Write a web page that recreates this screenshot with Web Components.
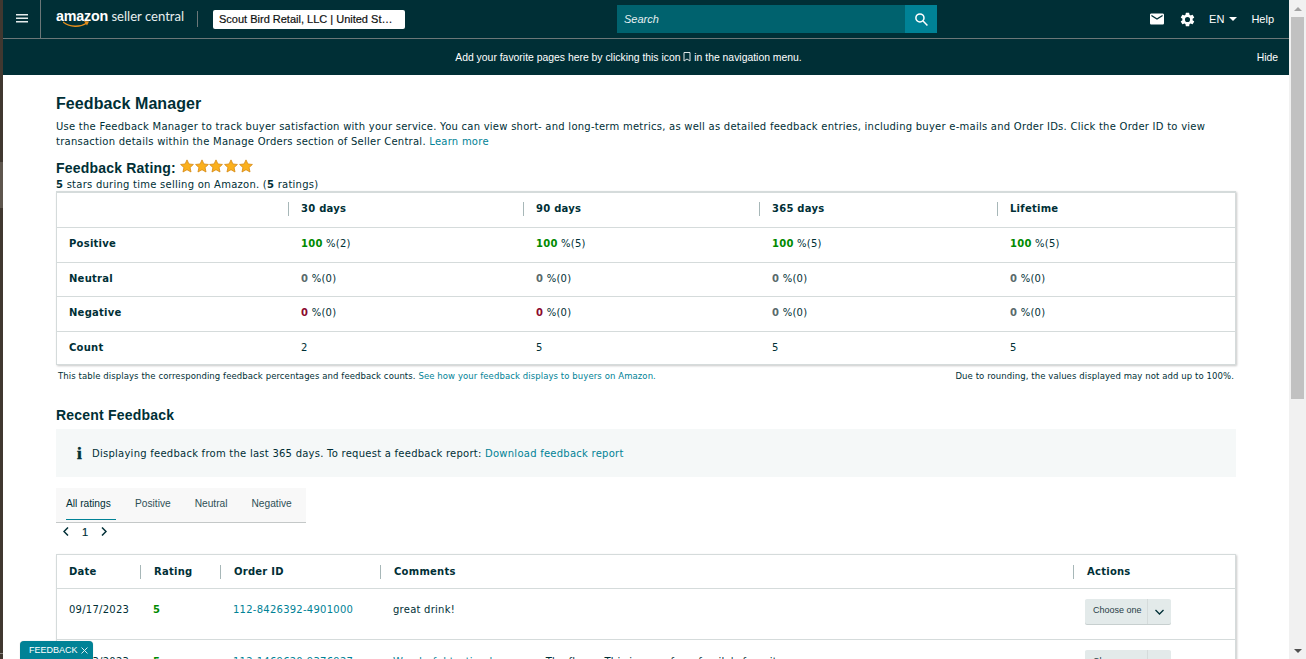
<!DOCTYPE html>
<html lang="en"><head><meta charset="utf-8"><title>Feedback Manager</title>
<style>
html,body{margin:0;height:659px;overflow:hidden;background:#fff}
body{display:flex;font-family:"DejaVu Sans",sans-serif;color:#002f36;position:relative}
</style></head><body>
<edge-strip></edge-strip>
<main-view>
  <top-nav></top-nav>
  <favorites-banner></favorites-banner>
  <page-content>
    <h-title size="16" style="margin-top:19px;letter-spacing:.08px">Feedback Manager</h-title>
    <intro-text>Use the Feedback Manager to track buyer satisfaction with your service. You can view short- and long-term metrics, as well as detailed feedback entries, including buyer e-mails and Order IDs. Click the Order ID to view transaction details within the Manage Orders section of Seller Central. <a>Learn more</a></intro-text>
    <rating-summary></rating-summary>
    <metrics-table></metrics-table>
    <table-notes></table-notes>
    <h-title size="14" style="margin-top:23px;letter-spacing:.2px">Recent Feedback</h-title>
    <info-alert></info-alert>
    <rating-tabs></rating-tabs>
    <page-nav></page-nav>
    <feedback-table></feedback-table>
  </page-content>
</main-view>
<fake-scrollbar></fake-scrollbar>
<feedback-tab></feedback-tab>
<script>
const def=(n,html,extra)=>customElements.define(n,class extends HTMLElement{
  constructor(){super();this.attachShadow({mode:'open'}).innerHTML=html;}
  connectedCallback(){extra&&extra.call(this)}
});
const mail='<svg width="14" height="14" viewBox="2 2 20 20" fill="#fff"><path d="M20 4H4c-1.1 0-2 .9-2 2v12c0 1.1.9 2 2 2h16c1.1 0 2-.9 2-2V6c0-1.1-.9-2-2-2zm0 4l-8 5-8-5V6l8 5 8-5v2z"/></svg>';
const gear='<svg width="15" height="15" viewBox="1.500 1.500 21 21" fill="#fff"><path d="M19.140 12.940c.04-.3.06-.61.06-.94s-.02-.64-.07-.94l2.030-1.580a.49.49 0 0 0 .12-.61l-1.920-3.320a.49.49 0 0 0-.59-.22l-2.390.96c-.5-.38-1.030-.7-1.620-.94l-.36-2.540a.48.48 0 0 0-.48-.41h-3.840a.48.48 0 0 0-.47.41l-.36 2.540c-.59.24-1.130.57-1.620.94l-2.390-.96a.48.48 0 0 0-.59.22L2.740 8.870a.47.47 0 0 0 .12.61l2.030 1.580c-.05.3-.09.63-.09.94s.02.64.07.94l-2.030 1.580a.49.49 0 0 0-.12.61l1.920 3.320c.12.22.37.29.59.22l2.390-.96c.5.38 1.030.7 1.620.94l.36 2.540c.05.24.24.41.48.41h3.840c.24 0 .44-.17.47-.41l.36-2.540c.59-.24 1.130-.56 1.620-.94l2.390.96c.22.08.47 0 .59-.22l1.920-3.320a.47.47 0 0 0-.12-.61l-2.010-1.580zM12 15.600A3.600 3.600 0 1 1 12 8.400a3.600 3.600 0 0 1 0 7.200z"/></svg>';
def('edge-strip',`<style>:host{display:block;width:3px;flex:none;background:#403830;position:relative}i{position:absolute;left:0;top:162px;width:3px;height:46px;background:#5e564e}u{position:absolute;left:0;top:653px;width:3px;height:1px;background:#8a8580}</style><i></i><u></u>`);
def('main-view',`<style>:host{display:flex;flex-direction:column;flex:1;min-width:0;height:659px;overflow:hidden}</style><slot></slot>`);
def('top-nav',`<style>
:host{display:flex;align-items:center;height:38px;background:#002f36;border-bottom:1px solid #6c7778;color:#fff;font-family:"Liberation Sans",sans-serif;flex:none}
.menu{width:37px;height:38px;border-right:1px solid #6c7778;display:flex;align-items:center;justify-content:center;flex:none}
.menu svg{margin-left:1px}
.logo{margin-left:15px;width:129px;position:relative;font-family:"Lato",sans-serif;font-size:13.100px;line-height:16px;white-space:nowrap;height:22px;color:#e8eeee}
.logo b{font-family:"Liberation Sans",sans-serif;font-weight:700;font-size:14.300px;letter-spacing:-.2px;color:#fff}
.logo svg{position:absolute;left:7px;top:13px}
.sep{width:1px;height:16px;background:#6c7778;margin:0 15px 0 12px}
.acct{width:192px;height:19px;box-sizing:border-box;background:#fff;color:#0f1111;border-radius:2px;font-size:11px;font-weight:400;display:flex;align-items:center;padding:0 6px;white-space:nowrap;-webkit-text-stroke:.2px #0f1111;flex:none}
.search{margin-left:212px;width:320px;height:28px;display:flex;flex:none}
.search span{flex:1;background:#00626e;font:italic 11px "Liberation Sans",sans-serif;line-height:28px;padding-left:7px;color:#e6f0f2}
.search button{all:unset;width:32px;background:#008296;display:flex;align-items:center;justify-content:center}
.right{margin-left:auto;display:flex;align-items:center;font-size:11px}
.right>*{flex:none}
.car{display:inline-block;width:0;height:0;border:4px solid transparent;border-top:4px solid #fff;border-bottom:0;margin-left:5px;vertical-align:2px}
</style>
<div class="menu"><svg width="12" height="10" viewBox="0 0 12 10" fill="#e6ecec"><path d="M0 0h12v1.600H0zM0 3.500h12v1.600H0zM0 7h12v1.600H0z"/></svg></div>
<div class="logo"><b>amazon</b> seller central<svg width="28" height="8" viewBox="0 0 28 8"><path d="M0 1c7 5.500 17 5.500 24 1" fill="none" stroke="#e88f1c" stroke-width="1.300"/><path d="M21 0l5 .5-2 4z" fill="#e88f1c"/></svg></div>
<div class="sep"></div>
<div class="acct">Scout Bird Retail, LLC | United St…</div>
<div class="search"><span>Search</span><button><svg width="15" height="15" viewBox="0 0 24 24" fill="none" stroke="#fff" stroke-width="2.400"><circle cx="9.500" cy="9.500" r="6.500"/><path d="M14.500 14.500l7 7"/></svg></button></div>
<div class="right"><span style="margin-right:16px;display:flex">${mail}</span><span style="margin-right:14px;display:flex">${gear}</span><span>EN<i class="car"></i></span><span style="margin:0 15px 0 14px">Help</span></div>`);
def('favorites-banner',`<style>:host{display:flex;height:36px;align-items:center;background:#002f36;color:#fff;font:10.400px "Liberation Sans",sans-serif;position:relative;justify-content:center;flex:none;padding-right:35px}
svg{vertical-align:-1px}em{font-style:normal;position:absolute;right:11px}</style>
<span>Add your favorite pages here by clicking this icon <svg width="8" height="10" viewBox="0 0 8 10" fill="none" stroke="#dfe6e7"><path d="M1 .5h6v8.500L4 7 1 9z"/></svg> in the navigation menu.</span><em>Hide</em>`);
def('page-content',`<style>:host{display:flex;flex-direction:column;padding:0 53px 0 53px;flex:none}</style><slot></slot>`);
def('h-title',`<style>:host{display:block;font:700 16px/20px "Liberation Sans",sans-serif;color:#002f36}</style><slot></slot>`,function(){this.style.fontSize=this.getAttribute('size')+'px'});
def('intro-text',`<style>:host{display:block;font:10px/15px "DejaVu Sans",sans-serif;letter-spacing:.25px;color:#002f36;margin-top:5px}::slotted(a){color:#008296}</style><slot></slot>`);
const star='<svg width="14" height="14" viewBox="0 0 24 24" style="flex:none"><path d="M12 1.500l3.300 7 7.700.9-5.700 5.200 1.600 7.700L12 18.400 5.100 22.300l1.600-7.700L1 9.400l7.700-.9z" fill="#fbb01c" stroke="#d3860e" stroke-width="1.300"/></svg>';
def('rating-summary',`<style>:host{display:block;margin-top:9px;height:33px}
.t{display:flex;align-items:center;height:20px;font:700 14px/20px "Liberation Sans",sans-serif;letter-spacing:.2px;gap:4px}
.s{display:flex;gap:.8px;margin-top:-4px}.d{font:10px/12px "DejaVu Sans",sans-serif;letter-spacing:.25px;margin-top:1px}b{font-weight:700}</style>
<div class="t">Feedback Rating:<span class="s">${star.repeat(5)}</span></div><div class="d"><b>5</b> stars during time selling on Amazon. (<b>5</b> ratings)</div>`);
const cols5='231px 235px 236px 238px 238px';
def('metrics-table',`<style>:host{display:block;border:1px solid #d5dbdb;box-shadow:1px 1px 2px rgba(0,0,0,.22);height:174px;box-sizing:border-box;font:10px/14px "DejaVu Sans",sans-serif;letter-spacing:.25px;color:#002f36;background:#fff}
.r{display:grid;grid-template-columns:${cols5};align-items:center;border-top:1px solid #d5dbdb;height:35px;box-sizing:border-box;padding-bottom:2px}
.r:first-child{border-top:0;height:33px}
.r>*{padding-left:13px}.r>*:first-child{padding-left:12px}
.r.h>*{font-weight:700;padding-left:12px;border-left:1px solid #a7b7b8;line-height:14px}.r.h>*:first-child{border:0}
.r span b{font-weight:700}.g{color:#008a00}.z{color:#5a6b6c}.m{color:#8c0a2e}
.r>b{font-weight:700}</style>
<div class="r h"><span></span><span>30 days</span><span>90 days</span><span>365 days</span><span>Lifetime</span></div>
<div class="r"><b>Positive</b><span><b class="g">100</b> %(2)</span><span><b class="g">100</b> %(5)</span><span><b class="g">100</b> %(5)</span><span><b class="g">100</b> %(5)</span></div>
<div class="r" style="height:34px"><b>Neutral</b><span><b class="z">0</b> %(0)</span><span><b class="z">0</b> %(0)</span><span><b class="z">0</b> %(0)</span><span><b class="z">0</b> %(0)</span></div>
<div class="r"><b>Negative</b><span><b class="m">0</b> %(0)</span><span><b class="m">0</b> %(0)</span><span><b class="z">0</b> %(0)</span><span><b class="z">0</b> %(0)</span></div>
<div class="r"><b>Count</b><span>2</span><span>5</span><span>5</span><span>5</span></div>`);
def('table-notes',`<style>:host{display:flex;justify-content:space-between;font:8.500px/12px "DejaVu Sans",sans-serif;letter-spacing:.09px;margin-top:5px;padding:0 2px;color:#002f36}a{color:#008296}</style>
<span>This table displays the corresponding feedback percentages and feedback counts. <a>See how your feedback displays to buyers on Amazon.</a></span><span>Due to rounding, the values displayed may not add up to 100%.</span>`);
def('info-alert',`<style>:host{display:flex;align-items:center;height:48px;box-sizing:border-box;padding-top:1px;background:#f5f8f8;margin-top:4px;padding-left:21px;font:10px/14px "DejaVu Sans",sans-serif;letter-spacing:.25px;color:#002f36}
b{font:700 17px "Liberation Serif",serif;width:15px;-webkit-text-stroke:.6px #002f36}a{color:#008296}</style><b>i</b><span>Displaying feedback from the last 365 days. To request a feedback report: <a>Download feedback report</a></span>`);
def('rating-tabs',`<style>:host{display:flex;width:250px;height:35px;box-sizing:border-box;background:#f8f8f8;border-bottom:1px solid #c4c8c8;margin-top:11px;font:10.200px "Liberation Sans",sans-serif;color:#002f36;padding-left:10px;gap:24px;align-items:stretch}
span{display:flex;align-items:center;height:31px;color:#2f5057}span.a{color:#002f36;width:50px;border-bottom:1px solid #008296;height:31px;margin-right:-5px}</style>
<span class="a">All ratings</span><span>Positive</span><span>Neutral</span><span>Negative</span>`);
def('page-nav',`<style>:host{display:flex;align-items:center;height:17px;padding-left:7px;font:11px "Liberation Sans",sans-serif;color:#002f36;-webkit-text-stroke:.2px #002f36}
span{margin:0 13px 0 13px}svg{flex:none}</style><svg width="6" height="9" viewBox="0 0 6 9" fill="none" stroke="#002f36" stroke-width="1.500"><path d="M5 .5l-4 4 4 4"/></svg><span>1</span><svg width="6" height="9" viewBox="0 0 6 9" fill="none" stroke="#002f36" stroke-width="1.500"><path d="M1 .5l4 4-4 4"/></svg>`);
def('choose-one',`<style>:host{display:inline-flex;width:86px;height:25px;box-sizing:border-box;background:#e3eaea;border-radius:2px;box-shadow:0 1px 0 #c7cfcf;font:9px "Liberation Sans",sans-serif;color:#2a4148;align-items:center;letter-spacing:0}
span{width:63px;padding-left:8px;box-sizing:border-box;border-right:1px solid #d5dbdb;height:25px;line-height:23px}svg{margin-left:7px}</style><span>Choose one</span><svg width="9" height="6" viewBox="0 0 9 6" fill="none" stroke="#002f36" stroke-width="1.300"><path d="M.5 1l4 4 4-4"/></svg>`);
const c6='83px 80px 160px 693px 162px';
def('feedback-table',`<style>:host{display:block;border:1px solid #d5dbdb;box-shadow:1px 1px 2px rgba(0,0,0,.22);margin-top:14px;box-sizing:border-box;font:10px/14px "DejaVu Sans",sans-serif;letter-spacing:.25px;color:#002f36;background:#fff}
.r{display:grid;grid-template-columns:${c6};border-top:1px solid #d5dbdb;height:51px;box-sizing:border-box;padding-top:14px}
.r.n{padding-top:15px}.r.n .act{margin-top:-5px}
.r>*{padding-left:13px}.r>*:first-child{padding-left:12px}
.r.h{border-top:0;height:33px;align-items:center;padding:0}
.r.h>*{font-weight:700;border-left:1px solid #a7b7b8;padding-left:13px}.r.h>*:first-child{border:0;padding-left:12px}
.g{color:#008a00;font-weight:700}a{color:#008296}.act{margin-top:-4px;padding-left:12px}</style>
<div class="r h"><span>Date</span><span>Rating</span><span>Order ID</span><span>Comments</span><span>Actions</span></div>
<div class="r"><span>09/17/2023</span><span class="g">5</span><span><a>112-8426392-4901000</a></span><span>great drink!</span><span class="act"><choose-one></choose-one></span></div>
<div class="r n"><span>09/13/2023</span><span class="g">5</span><span><a>112-1469620-9376927</a></span><span><a>Wonderful tasting beverage.</a> The flavor. This is one of our family's favorite</span><span class="act"><choose-one></choose-one></span></div>`);
def('fake-scrollbar',`<style>:host{display:flex;flex-direction:column;width:17px;flex:none;height:659px;background:#f1f1f1;align-items:center}
.t{width:15px;height:17px;display:flex;align-items:center;justify-content:center}
.th{width:13px;height:382px;background:#c1c1c1}.sp{flex:1}
i{width:0;height:0;border:4px solid transparent}</style>
<div class="t"><i style="border-bottom:4px solid #a3a3a3;border-top:0"></i></div><div class="th"></div><div class="sp"></div><div class="t"><i style="border-top:4px solid #505050;border-bottom:0"></i></div>`);
def('feedback-tab',`<style>:host{position:absolute;left:20px;top:641px;width:73px;height:18px;background:#008296;color:#fff;border-radius:4px 4px 0 0;font:9px/18px "Liberation Sans",sans-serif;display:flex;align-items:center;padding-left:9px;box-sizing:border-box;gap:3px;box-shadow:0 0 1px rgba(0,0,0,.3)}</style>FEEDBACK<svg width="7" height="7" viewBox="0 0 7 7" stroke="#dfeff1" fill="none"><path d="M.5.500l6 6M6.500.500l-6 6"/></svg>`);
</script>
</body></html>
